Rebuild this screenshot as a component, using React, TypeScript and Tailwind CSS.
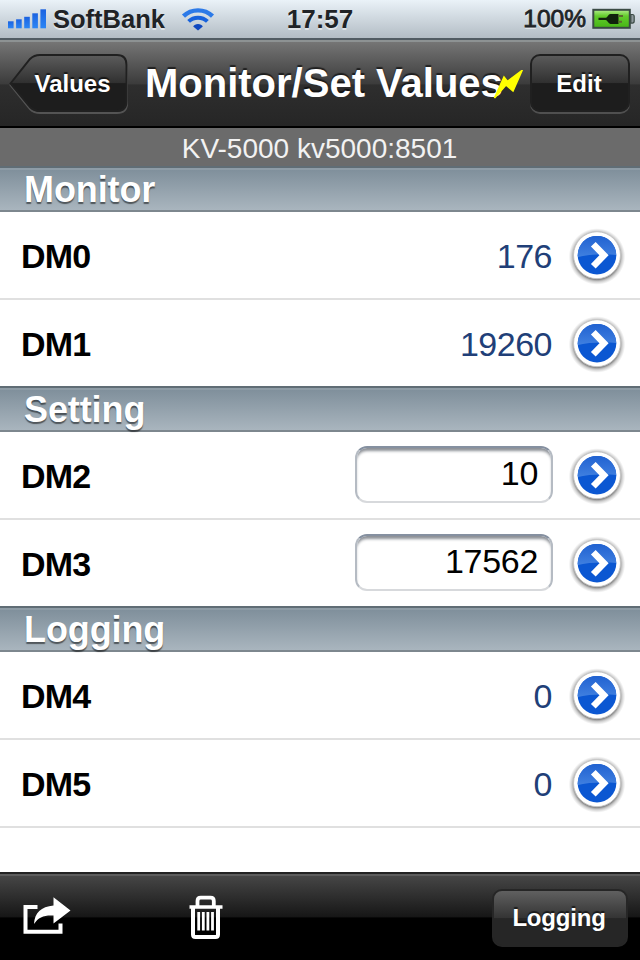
import type { ReactNode } from 'react';
import { clsx } from 'clsx';

interface Device {
  name: string;
  value: string;
}

interface Section {
  title: string;
  editable?: boolean;
  devices: Device[];
}

const sections: Section[] = [
  {
    title: 'Monitor',
    devices: [
      { name: 'DM0', value: '176' },
      { name: 'DM1', value: '19260' },
    ],
  },
  {
    title: 'Setting',
    editable: true,
    devices: [
      { name: 'DM2', value: '10' },
      { name: 'DM3', value: '17562' },
    ],
  },
  {
    title: 'Logging',
    devices: [
      { name: 'DM4', value: '0' },
      { name: 'DM5', value: '0' },
    ],
  },
];

function SignalIcon() {
  return (
    <svg className="h-[20px] w-[38px] shrink-0" viewBox="0 0 38 20">
      <defs>
        <linearGradient id="signal" x1="0" y1="0" x2="0" y2="1">
          <stop offset="0" stopColor="#1b62e0" />
          <stop offset="1" stopColor="#2b86f5" />
        </linearGradient>
      </defs>
      {[7, 9, 11.5, 15, 19].map((height, index) => (
        <rect key={height} x={index * 8.1} y={19.3 - height} width="5.6" height={height} fill="url(#signal)" />
      ))}
    </svg>
  );
}

function WifiIcon() {
  return (
    <svg className="h-[24px] w-[34px] shrink-0" viewBox="0 0 34 24" fill="none" stroke="#1762dc">
      <path d="M2.5 9.2C10.5 1.4 23.5 1.4 31.5 9.2" stroke="#2c7ae8" strokeWidth="4.4" />
      <path d="M7.6 14.4C12.8 9.4 21.2 9.4 26.4 14.4" strokeWidth="4" />
      <path d="M17 23.6L12.2 19.6C13.5 16 20.5 16 21.8 19.6Z" fill="#0f48c0" stroke="none" />
    </svg>
  );
}

function BatteryIcon() {
  return (
    <svg className="h-[22px] w-[44px] shrink-0" viewBox="0 0 44 22">
      <defs>
        <linearGradient id="battery" x1="0" y1="0" x2="0" y2="1">
          <stop offset="0" stopColor="#b3ec8c" />
          <stop offset="0.35" stopColor="#62cc2b" />
          <stop offset="1" stopColor="#46b515" />
        </linearGradient>
      </defs>
      <rect x="1.3" y="1.8" width="36.5" height="18" fill="url(#battery)" stroke="#3a4a44" strokeWidth="2" />
      <path d="M38.8 6.5h1.6q1.8 0 1.8 2v4.6q0 2-1.8 2h-1.6z" fill="#8e989c" stroke="#3a4a44" strokeWidth="1.2" />
      <path d="M6.5 9.7h7c2 0 2.2-3.2 5-3.8h8v10h-8c-2.8-.6-3-3.8-5-3.8h-7z" fill="#10230c" />
      <path d="M26.5 8h4.5M26.5 13.8h3.5" stroke="#5c6a30" strokeWidth="2" />
    </svg>
  );
}

function DisclosureIcon({ id }: { id: string }) {
  return (
    <svg className="h-[60px] w-[60px] shrink-0" viewBox="0 -1.7 60 60">
      <defs>
        <linearGradient id={`${id}-top`} x1="0" y1="0" x2="0" y2="1">
          <stop offset="0" stopColor="#1f60d0" />
          <stop offset="1" stopColor="#4080e0" />
        </linearGradient>
        <radialGradient id={`${id}-shade`}>
          <stop offset="0.78" stopColor="#444" stopOpacity="0.85" />
          <stop offset="0.88" stopColor="#777" stopOpacity="0.4" />
          <stop offset="1" stopColor="#999" stopOpacity="0" />
        </radialGradient>
        <clipPath id={`${id}-clip`}>
          <circle cx="30" cy="28.5" r="19.3" />
        </clipPath>
      </defs>
      <circle cx="30" cy="29.8" r="28.3" fill={`url(#${id}-shade)`} />
      <circle cx="30" cy="28.5" r="23.5" fill="#fff" stroke="#c4c4c4" strokeWidth="1" />
      <g clipPath={`url(#${id}-clip)`}>
        <rect x="10" y="8" width="40" height="41" fill="#0b57d2" />
        <path d="M10 8h40v20.5c-12-1-28-1-40 2z" fill={`url(#${id}-top)`} />
      </g>
      <path d="M26.3 17.5L37 28.5L26.3 39.5" fill="none" stroke="#fff" strokeWidth="6.6" />
    </svg>
  );
}

function ShareIcon() {
  return (
    <svg className="mb-[3px] h-[38px] w-[48px]" viewBox="0 0 48 38">
      <path d="M14.5 10H2.5V34.7H37.5V26.5" fill="none" stroke="#fff" strokeWidth="4" />
      <path d="M11 27C11.5 16 18 9.5 30.5 8.5V0.3L47.5 13.5L30.5 26.5V18.5C21 18 15.5 20 11 27Z" fill="#fff" />
    </svg>
  );
}

function TrashIcon() {
  return (
    <svg className="h-[46px] w-[34px]" viewBox="0 0 34 46" fill="none" stroke="#fff">
      <path d="M8.5 12V7Q8.5 3.7 11.8 3.7H21.5Q24.8 3.7 24.8 7V12" strokeWidth="3.8" />
      <path d="M0.5 13H33.5" strokeWidth="3.6" />
      <path d="M4 13V40.5Q4 43 6.5 43H26.5Q29 43 29 40.5V13" strokeWidth="4" />
      <path d="M9.7 18V36.5M14.3 18V36.5M18.9 18V36.5M23.5 18V36.5" strokeWidth="2.8" />
    </svg>
  );
}

function BarButton({ className, children }: { className?: string; children: ReactNode }) {
  return (
    <button
      className={clsx(
        'flex h-[58px] shrink-0 items-center justify-center rounded-[10px] border-2 text-[24px] font-bold leading-none text-white [text-shadow:0_-2px_1px_rgba(0,0,0,0.6)]',
        className,
      )}
    >
      {children}
    </button>
  );
}

function BackButton() {
  return (
    <button className="relative h-[62px] w-[120px] shrink-0 text-[24px] font-bold leading-none text-white [text-shadow:0_-2px_1px_rgba(0,0,0,0.6)]">
      <svg className="absolute inset-0 h-[62px] w-[120px]" viewBox="0 0 120 62">
        <defs>
          <linearGradient id="back" x1="0" y1="0" x2="0" y2="1">
            <stop offset="0" stopColor="#5c5c5c" />
            <stop offset="0.5" stopColor="#303030" />
            <stop offset="0.51" stopColor="#1d1d1d" />
            <stop offset="1" stopColor="#1d1d1d" />
          </linearGradient>
        </defs>
        <path
          d="M1.5 32L21 7Q25 3 31 3H108Q118 3 118 13V50Q118 60 108 60H31Q25 60 21 56Z"
          fill="none"
          stroke="#666"
          strokeOpacity="0.7"
          strokeWidth="2"
        />
        <path
          d="M1.5 30.5L21 6Q25 2 31 2H108Q117.5 2 117.5 12V48Q117.5 58 108 58H31Q25 58 21 54Z"
          fill="url(#back)"
          stroke="#202020"
          strokeWidth="2"
        />
      </svg>
      <span className="relative pl-[7px]">Values</span>
    </button>
  );
}

function SectionHeader({ title }: { title: string }) {
  return (
    <h2 className="h-[46px] border-t-2 border-b-2 border-t-[#606d75] border-b-[#7d878e] bg-linear-to-b from-[#7e8e9a] to-[#a9b5be] pl-[24px] text-[36px] font-bold leading-[44px] tracking-[-0.1px] text-white shadow-[inset_0_2px_0_#8e9ca6] [text-shadow:0_2px_1px_rgba(0,0,0,0.5)]">
      {title}
    </h2>
  );
}

function DeviceRow({ device, editable }: { device: Device; editable?: boolean }) {
  return (
    <li className="box-content flex h-[86px] items-center text-[34px] leading-none">
      <span className="flex-1 pt-px pl-[21px] font-bold tracking-[-0.8px] text-black">{device.name}</span>
      {editable ? (
        <div className="mr-[14px] mb-px flex h-[57px] w-[198px] items-center justify-end rounded-[12px] border-2 border-t-[#8590a0] border-r-[#b5bbc3] border-b-[#d7d9dc] border-l-[#b5bbc3] bg-white pr-[13px] pb-[3px] tracking-[-0.3px] text-black shadow-[inset_0_4px_3px_-1px_#8c9096]">
          {device.value}
        </div>
      ) : (
        <span className="mr-[15px] pt-px tracking-[-0.5px] text-[#213f78]">{device.value}</span>
      )}
      <span className="mr-[13px]">
        <DisclosureIcon id={device.name} />
      </span>
    </li>
  );
}

export default function App() {
  return (
    <div className="flex h-[960px] w-[640px] flex-col overflow-hidden bg-white font-['Liberation_Sans',Arial,sans-serif]">
      {/* Status bar */}
      <div className="grid h-[40px] shrink-0 grid-cols-3 items-center border-b-2 border-[#515c63] bg-linear-to-b from-[#eaf2f8] to-[#b3bdc5] text-[25px] font-bold leading-none text-[#202326] [text-shadow:0_2px_0_rgba(255,255,255,0.5)]">
        <div className="flex items-center pl-[8px]">
          <SignalIcon />
          <span className="ml-[7px] pt-px text-[25.5px]">SoftBank</span>
          <span className="ml-[16px]">
            <WifiIcon />
          </span>
        </div>
        <span className="text-center text-[26px]">17:57</span>
        <div className="flex items-center justify-end pr-[4px]">
          <span className="pt-px text-[24.5px] font-normal [-webkit-text-stroke:0.8px_#202326]">100%</span>
          <span className="ml-[6px]">
            <BatteryIcon />
          </span>
        </div>
      </div>

      {/* Navigation bar */}
      <div className="flex h-[88px] shrink-0 items-center border-t-2 border-b-2 border-t-[#8d9293] border-b-black bg-[linear-gradient(#757575,#3b3b3b_50%,#2e2e2e_51%,#262626)] pr-[10px] pl-[9px]">
        <BackButton />
        <div className="relative ml-[16px] w-[380px]">
          <h1 className="pb-[2px] text-[40px] font-bold leading-[42px] whitespace-nowrap text-white [text-shadow:0_-2px_1px_rgba(0,0,0,0.6)]">
            Monitor/Set Values
          </h1>
          <svg className="absolute top-[8px] left-[348px] h-[30px] w-[30px]" viewBox="0 0 30 30">
            <path d="M1.5 28L11 7L14.5 11.5L29 0.5L20 21L13 15Z" fill="#ff0" stroke="#ff0" strokeWidth="1.6" />
          </svg>
        </div>
        <BarButton className="mb-[2px] ml-auto w-[100px] border-[#202020] bg-[linear-gradient(#5a5a5a,#303030_50%,#1d1d1d_51%)] shadow-[0_2px_0_#505050]">
          <span className="pt-px pr-[2px]">Edit</span>
        </BarButton>
      </div>

      <p className="h-[38px] shrink-0 bg-[#6b6b6b] pr-[1px] text-center text-[28px] leading-[41px] text-[#f2f2f2]">
        KV-5000 kv5000:8501
      </p>

      {/* Device list */}
      <main className="flex-1">
        {sections.map((section) => (
          <section key={section.title}>
            <SectionHeader title={section.title} />
            <ul className="divide-y-2 divide-[#e0e0e0]">
              {section.devices.map((device) => (
                <DeviceRow key={device.name} device={device} editable={section.editable} />
              ))}
            </ul>
          </section>
        ))}
        <div className="border-t-2 border-[#e0e0e0]" />
      </main>

      {/* Toolbar */}
      <div className="flex h-[88px] shrink-0 items-center border-t-2 border-[#222] bg-[linear-gradient(#484848,#161616_50%,#000_51%)] pr-[12px] pl-[23px] shadow-[inset_0_2px_0_#5c5c5c]">
        <ShareIcon />
        <span className="ml-[118px]">
          <TrashIcon />
        </span>
        <BarButton className="mt-[2px] ml-auto w-[136px] border-[#262626] bg-[linear-gradient(#606060,#343434_50%,#262626_51%)] tracking-[-0.2px]">
          <span className="pr-[2px]">Logging</span>
        </BarButton>
      </div>
    </div>
  );
}
